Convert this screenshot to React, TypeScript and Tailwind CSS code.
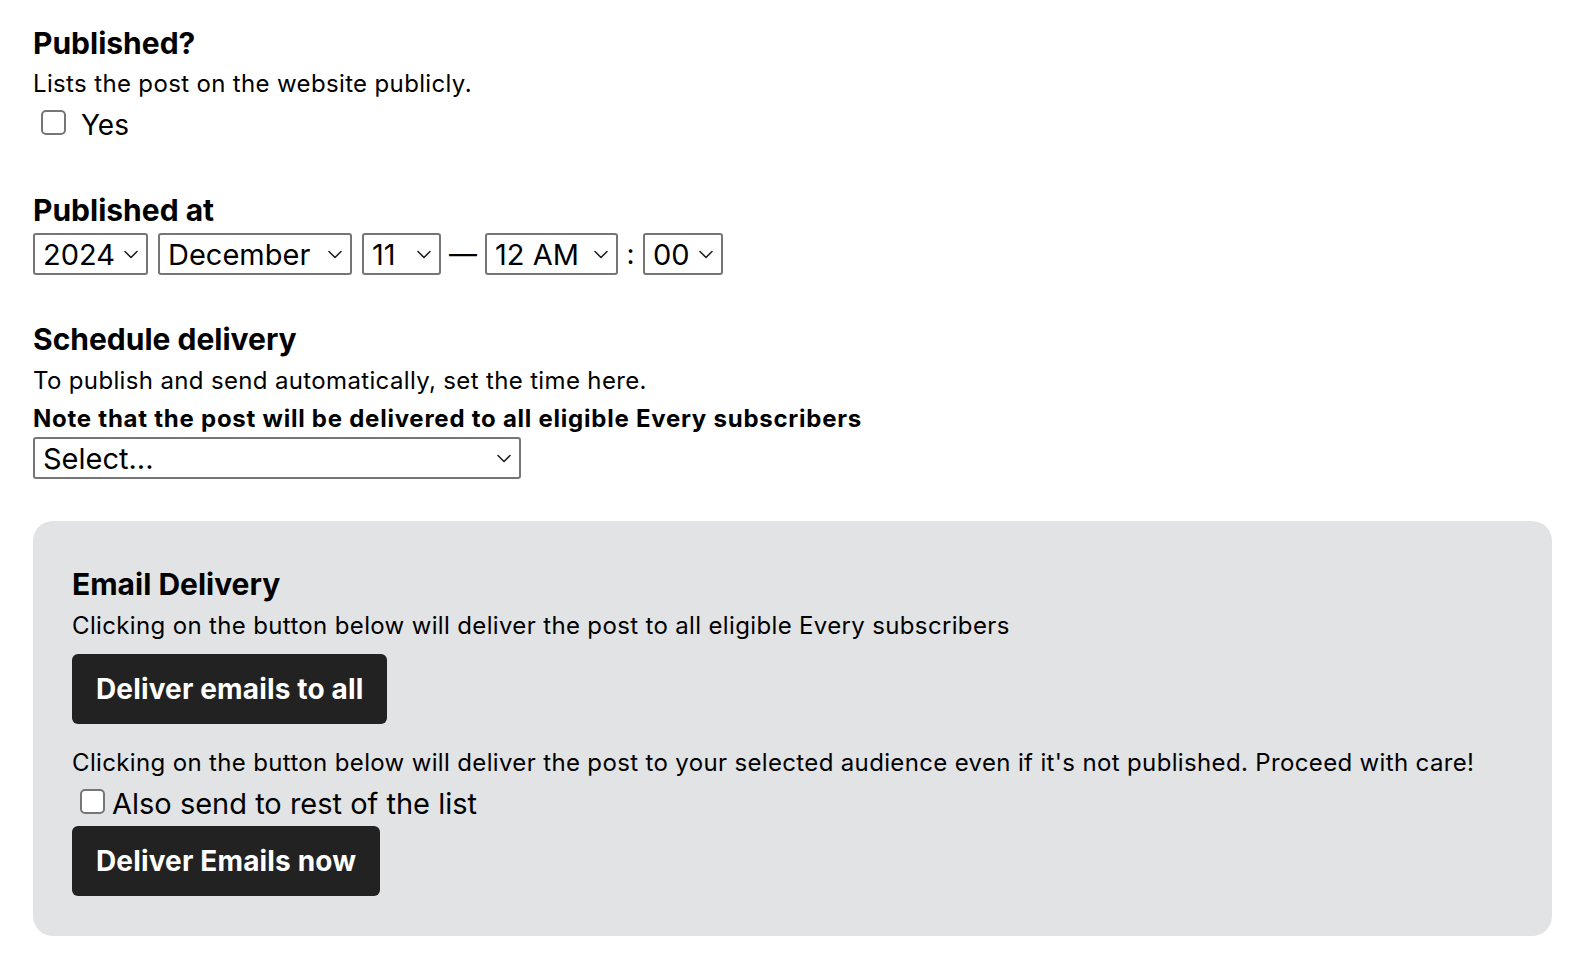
import React from "react";

function Chevron() {
  return (
    <svg width="14" height="9" viewBox="0 0 14 9" fill="none" className="shrink-0">
      <path d="M1 1.5 L7 7.5 L13 1.5" stroke="#222" strokeWidth="1.6" strokeLinecap="round" strokeLinejoin="round" />
    </svg>
  );
}

function FakeSelect({ value, width }: { value: string; width: string }) {
  return (
    <div className={`flex h-[42px] ${width} items-center justify-between rounded-[3px] border-2 border-[#767676] bg-white pl-[8px] pr-[8px] text-[29px] leading-none`}>
      <span>{value}</span>
      <Chevron />
    </div>
  );
}

function Checkbox() {
  return <span className="inline-block h-[25px] w-[25px] shrink-0 rounded-[5px] border-2 border-[#767676] bg-white" />;
}

export default function App() {
  return (
    <div className="min-h-screen bg-white pl-[33px] pr-[42px] pt-[24px] pb-[25px] text-black" style={{ fontFamily: "Inter, 'Noto Sans', sans-serif" }}>
      {/* Published */}
      <h2 className="text-[30px] font-bold leading-[38px]">Published?</h2>
      <p className="mt-[7px] text-[24px] leading-[30px] tracking-[0.35px]">Lists the post on the website publicly.</p>
      <label className="mt-[8px] flex h-[36px] items-center">
        <span className="ml-[8px]"><Checkbox /></span>
        <span className="ml-[15px] text-[28px]">Yes</span>
      </label>

      {/* Published at */}
      <h2 className="mt-[48px] text-[30px] font-bold leading-[38px]">Published at</h2>
      <div className="mt-[4px] flex items-center">
        <FakeSelect value="2024" width="w-[115px]" />
        <span className="ml-[10px]"><FakeSelect value="December" width="w-[194px]" /></span>
        <span className="ml-[10px]"><FakeSelect value="11" width="w-[79px]" /></span>
        <span className="w-[44px] text-center text-[28px]">—</span>
        <FakeSelect value="12 AM" width="w-[133px]" />
        <span className="w-[25px] text-center text-[28px]">:</span>
        <FakeSelect value="00" width="w-[80px]" />
      </div>

      {/* Schedule */}
      <h2 className="mt-[45px] text-[30px] font-bold leading-[38px]">Schedule delivery</h2>
      <p className="mt-[8px] text-[24px] leading-[30px] tracking-[0.35px]">To publish and send automatically, set the time here.</p>
      <p className="mt-[8px] text-[24px] font-bold leading-[30px] tracking-[0.75px]">Note that the post will be delivered to all eligible Every subscribers</p>
      <div className="mt-[3px]">
        <FakeSelect value="Select..." width="w-[488px]" />
      </div>

      {/* Email delivery */}
      <div className="mt-[42px] rounded-[20px] bg-[#e2e3e5] px-[39px] pt-[44px] pb-[40px]">
        <h2 className="text-[30px] font-bold leading-[38px]">Email Delivery</h2>
        <p className="mt-[8px] text-[24px] leading-[30px] tracking-[0.35px]">Clicking on the button below will deliver the post to all eligible Every subscribers</p>
        <button className="mt-[13px] flex h-[70px] items-center whitespace-nowrap rounded-[6px] bg-[#222222] px-[24px] text-[28px] font-bold tracking-[0.15px] text-white">
          Deliver emails to all
        </button>
        <p className="mt-[24px] text-[24px] leading-[30px] tracking-[0.35px]">
          Clicking on the button below will deliver the post to your selected audience even if it's not published. Proceed with care!
        </p>
        <label className="mt-[6px] flex h-[40px] items-center">
          <span className="ml-[8px]"><Checkbox /></span>
          <span className="ml-[7px] text-[29px]">Also send to rest of the list</span>
        </label>
        <button className="mt-[2px] flex h-[70px] items-center whitespace-nowrap rounded-[6px] bg-[#222222] px-[24px] text-[28px] font-bold tracking-[0.15px] text-white">
          Deliver Emails now
        </button>
      </div>
    </div>
  );
}
